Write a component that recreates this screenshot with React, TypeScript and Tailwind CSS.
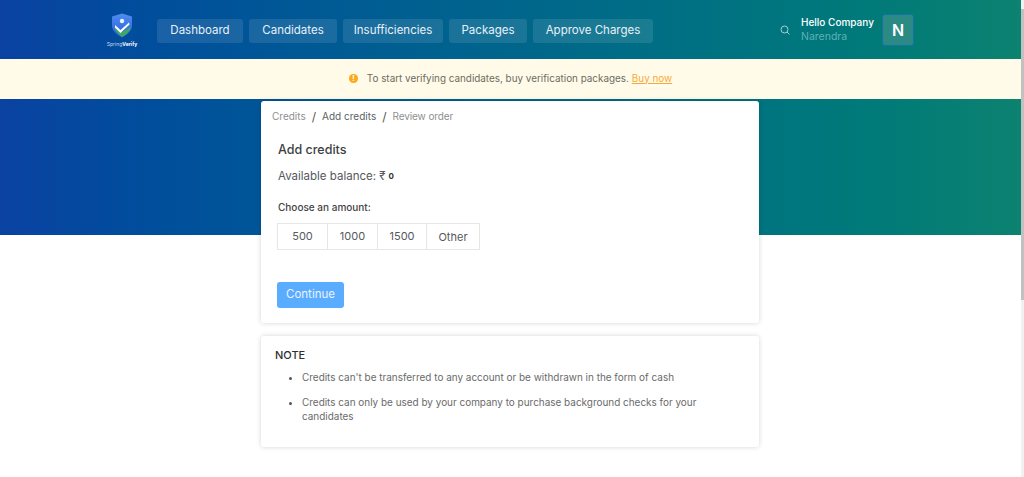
import React from "react";

const Logo = () => (
  <div className="mt-[1px] flex w-[32px] flex-col items-center">
    <svg width="22" height="25" viewBox="0 0 22 25">
      <defs>
        <linearGradient id="sh" x1="0" y1="0" x2="0" y2="1">
          <stop offset="0" stopColor="#4f8cf0" />
          <stop offset="1" stopColor="#2a5fd8" />
        </linearGradient>
      </defs>
      <path d="M11 0.5 L21 3.5 V12 C21 18 16 22 11 24.5 C6 22 1 18 1 12 V3.5 Z" fill="url(#sh)" />
      <path d="M3 14.5 C5 19 8 22 11 24 C15 22 18.5 19 20 14 L11 19 Z" fill="#3fa866" />
      <path d="M4 12 L9.5 17 L18 9.5 L18.5 11.5 L9.5 20 L4 14.5 Z" fill="#ffffff" />
      <circle cx="11" cy="8" r="2.2" fill="#e8f1ff" />
    </svg>
    <div className="mt-[3px] whitespace-nowrap text-[5px] leading-[6px] text-[#c9d8ee]">
      Spring<span className="font-bold text-white">Verify</span>
    </div>
  </div>
);

const navItems: [string, string][] = [
  ["Dashboard", "w-[86px]"],
  ["Candidates", "w-[88px]"],
  ["Insufficiencies", "w-[100px]"],
  ["Packages", "w-[78px]"],
  ["Approve Charges", "w-[120px]"],
];

export default function App() {
  return (
    <div className="relative h-[477px] overflow-hidden bg-white pr-[3px] font-['Inter','Open_Sans',sans-serif] text-[#333]">
      <header className="h-[59px] bg-gradient-to-r from-[#0a42a2] to-[#0c8270]">
        <div className="flex h-full items-center pl-[106px] pr-[107px]">
          <Logo />
          <nav className="ml-[19px] mt-[4px] flex h-[25px] gap-[6px]">
            {navItems.map(([t, w]) => (
              <div
                key={t}
                className={`${w} flex h-[24px] items-center justify-center whitespace-nowrap rounded-[3px] bg-white/10 text-[11.5px] text-[#e9f0f8]`}
              >
                {t}
              </div>
            ))}
          </nav>
          <div className="ml-auto flex items-center">
            <svg width="10" height="10" viewBox="0 0 10 10" fill="none" stroke="#a5cfd4" strokeWidth="1" className="mr-[11px]">
              <circle cx="4.5" cy="4.5" r="3.5" />
              <path d="M7 7 L9.5 9.5" />
            </svg>
            <div className="w-[81px] whitespace-nowrap">
              <div className="text-[10px] font-medium leading-[14px] text-white">Hello Company</div>
              <div className="mt-[1px] text-[10.5px] leading-[14px] text-[#5fb0b4]">Narendra</div>
            </div>
            <div className="flex h-[32px] w-[32px] items-center justify-center rounded-[3px] border border-[#1272a8] bg-[#2b8a84] text-[16px] font-semibold text-white">
              N
            </div>
          </div>
        </div>
      </header>

      <div className="flex h-[40px] items-center justify-center bg-[#fffbe8] pb-[2px] text-[9.9px] text-[#6b6b63]">
        <span className="mr-[9px] flex h-[9px] w-[9px] items-center justify-center rounded-full bg-[#fba919] text-[7px] font-bold leading-none text-white">
          !
        </span>
        <span>To start verifying candidates, buy verification packages.</span>
        <span className="ml-[3px] text-[#f8a93a] underline">Buy now</span>
      </div>

      <div className="h-[136px] bg-gradient-to-r from-[#0a42a2] to-[#0c8270]" />

      <main className="-mt-[134px] ml-[261px] flex w-[498px] flex-col gap-[13px]">
        <section className="h-[222px] rounded-[3px] bg-white px-[11px] shadow-[0_0_5px_rgba(0,0,0,0.17)]">
          <div className="flex h-[31px] items-center whitespace-nowrap text-[10px] text-[#8f8f8f]">
            <span>Credits</span>
            <span className="mx-[6px] text-[12px] text-[#555]">/</span>
            <span className="text-[#5a5f66]">Add credits</span>
            <span className="mx-[6px] text-[12px] text-[#555]">/</span>
            <span className="tracking-[-0.1px]">Review order</span>
          </div>
          <div className="pl-[6px]">
            <h2 className="mt-[9px] text-[12.5px] font-medium leading-[18px] text-[#3c3f44]">Add credits</h2>
            <div className="mt-[8px] flex items-center text-[11.5px] leading-[18px] text-[#55585c]">
              <span>Available balance: ₹</span>
              <span className="ml-[3px] text-[8px] font-bold text-[#333]">0</span>
            </div>
            <div className="mt-[15px] text-[10px] font-medium leading-[14px] text-[#444]">Choose an amount:</div>
            <div className="-ml-[1px] mt-[9px] flex h-[27px] w-[203px] border border-[#e6e6e6] text-[11px] text-[#55585c]">
              <div className="flex w-[50px] items-center justify-center border-r border-[#e6e6e6]">500</div>
              <div className="flex w-[50px] items-center justify-center border-r border-[#e6e6e6]">1000</div>
              <div className="flex w-[49px] items-center justify-center border-r border-[#e6e6e6]">1500</div>
              <div className="flex flex-1 items-center justify-center pt-[2px]">Other</div>
            </div>
            <button className="-ml-[1px] mt-[32px] flex h-[26px] w-[67px] items-center justify-center rounded-[3px] bg-[#5aacff] text-[11.5px] text-[#eaf4ff]">
              Continue
            </button>
          </div>
        </section>

        <section className="h-[111px] rounded-[3px] bg-white px-[14px] pt-[12px] shadow-[0_0_5px_rgba(0,0,0,0.17)]">
          <div className="text-[11px] font-medium leading-[14px] text-[#2f2f2f]">NOTE</div>
          <ul className="mt-[8px] list-disc pl-[27px] text-[9.95px] text-[#6a6a6a] marker:text-[#555]">
            <li className="leading-[14px]">Credits can't be transferred to any account or be withdrawn in the form of cash</li>
            <li className="mt-[11px] leading-[14px]">
              Credits can only be used by your company to purchase background checks for your candidates
            </li>
          </ul>
        </section>
      </main>

      <div className="absolute right-0 top-0 h-full w-[3px] bg-[#f1f1f1]">
        <div className="mt-[9px] h-[291px] w-full bg-[#c1c1c1]" />
      </div>
    </div>
  );
}
